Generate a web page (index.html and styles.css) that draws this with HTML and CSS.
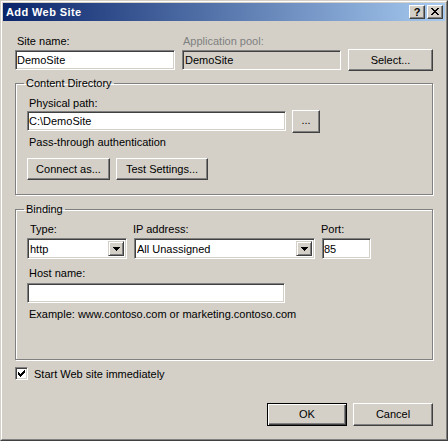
FILE: index.html
```html
<!DOCTYPE html>
<html>
<head>
<meta charset="utf-8">
<title>Add Web Site</title>
<link rel="stylesheet" href="styles.css">
</head>
<body>
<div class="window">
  <div class="frame">
    <div class="titlebar">
      <span class="title">Add Web Site</span>
      <div class="caption-btns">
        <span class="cbtn help">?</span>
        <span class="cbtn close"><svg width="8" height="7" viewBox="0 0 8 7" shape-rendering="crispEdges"><path d="M0 0h2v1H0zM6 0h2v1H6zM1 1h2v1H1zM5 1h2v1H5zM2 2h4v1H2zM3 3h2v1H3zM2 4h4v1H2zM1 5h2v1H1zM5 5h2v1H5zM0 6h2v1H0zM6 6h2v1H6z" fill="#000"/></svg></span>
      </div>
    </div>
    <div class="content">
      <div class="top-grid">
        <div class="lbl">Site name:</div>
        <div class="lbl disabled">Application pool:</div>
        <div></div>
        <input class="field" value="DemoSite">
        <div class="field readonly">DemoSite</div>
        <button class="btn select">Select...</button>
      </div>

      <fieldset class="group g1">
        <legend>Content Directory</legend>
        <div class="lbl">Physical path:</div>
        <div class="path-row">
          <input class="field path" value="C:\DemoSite">
          <button class="btn browse">...</button>
        </div>
        <div class="lbl pass">Pass-through authentication</div>
        <div class="btn-row">
          <button class="btn connect">Connect as...</button>
          <button class="btn test">Test Settings...</button>
        </div>
      </fieldset>

      <fieldset class="group g2">
        <legend>Binding</legend>
        <div class="binding-grid">
          <div class="lbl">Type:</div>
          <div class="lbl tight">IP address:</div>
          <div class="lbl tight">Port:</div>
          <div class="combo"><span class="combo-text">http</span><span class="drop"><svg width="7" height="4" viewBox="0 0 7 4" shape-rendering="crispEdges"><path d="M0 0h7v1H0zM1 1h5v1H1zM2 2h3v1H2zM3 3h1v1H3z" fill="#000"/></svg></span></div>
          <div class="combo"><span class="combo-text">All Unassigned</span><span class="drop"><svg width="7" height="4" viewBox="0 0 7 4" shape-rendering="crispEdges"><path d="M0 0h7v1H0zM1 1h5v1H1zM2 2h3v1H2zM3 3h1v1H3z" fill="#000"/></svg></span></div>
          <input class="field port" value="85">
        </div>
        <div class="lbl host-lbl">Host name:</div>
        <input class="field host" value="">
        <div class="lbl example">Example: www.contoso.com or marketing.contoso.com</div>
      </fieldset>

      <div class="check-row">
        <span class="checkbox"><svg width="7" height="7" viewBox="0 0 7 7" shape-rendering="crispEdges"><path d="M0 2h1v3H0zM1 3h1v3H1zM2 4h1v3H2zM3 3h1v3H3zM4 2h1v3H4zM5 1h1v3H5zM6 0h1v3H6z" fill="#000"/></svg></span>
        <span class="check-label">Start Web site immediately</span>
      </div>

      <div class="actions">
        <button class="btn action default">OK</button>
        <button class="btn action">Cancel</button>
      </div>
    </div>
  </div>
</div>
</body>
</html>
```

FILE: styles.css
```css
* {
  box-sizing: border-box;
}

html, body {
  margin: 0;
  padding: 0;
  background: #d4d0c8;
}

body {
  font-family: "Liberation Sans", Arial, sans-serif;
  font-size: 11px;
  line-height: 13px;
  color: #000;
}

.window {
  width: 448px;
  height: 441px;
  border: 1px solid;
  border-color: #d4d0c8 #404040 #404040 #d4d0c8;
  background: #d4d0c8;
}

.frame {
  height: 100%;
  border: 1px solid;
  border-color: #ffffff #808080 #808080 #ffffff;
  padding: 1px;
}

.titlebar {
  height: 18px;
  display: flex;
  align-items: center;
  justify-content: space-between;
  padding: 0 2px 0 3px;
  background: linear-gradient(to right, #0a246a, #a6caf0);
}

.title {
  color: #fff;
  font-weight: bold;
  font-size: 11px;
  line-height: 18px;
  letter-spacing: 0.4px;
}

.caption-btns {
  display: flex;
  gap: 2px;
}

.cbtn {
  width: 16px;
  height: 14px;
  display: flex;
  align-items: center;
  justify-content: center;
  background: #d4d0c8;
  border: 1px solid;
  border-color: #ffffff #404040 #404040 #ffffff;
  box-shadow: inset -1px -1px #808080;
}

.cbtn.help {
  font-weight: bold;
  font-size: 11px;
  line-height: 12px;
  padding-bottom: 1px;
}

.cbtn.close svg {
  display: block;
  margin-top: -1px;
}

.content {
  padding: 0 12px;
}

.lbl {
  line-height: 13px;
  white-space: nowrap;
  padding-left: 2px;
}

.lbl.disabled {
  color: #808080;
  padding-left: 1px;
}

.lbl.tight {
  padding-left: 0;
  margin-left: -1px;
}

.top-grid {
  margin-top: 14px;
  display: grid;
  grid-template-columns: 160px 159px 85px;
  grid-template-rows: 13px 20px;
  column-gap: 7px;
  row-gap: 2px;
}

.field {
  display: block;
  height: 20px;
  margin: 0;
  padding: 0 0 0 1px;
  font: inherit;
  color: #000;
  background: #fff;
  border: 1px solid;
  border-color: #808080 #ffffff #ffffff #808080;
  box-shadow: inset 1px 1px #404040, inset -1px -1px #d4d0c8;
  outline: none;
  line-height: 18px;
}

div.field {
  padding-left: 2px;
}

.field.readonly {
  background: #d4d0c8;
}

.btn {
  margin: 0;
  padding: 0;
  font: inherit;
  color: #000;
  background: #d4d0c8;
  border: 1px solid;
  border-color: #ffffff #404040 #404040 #ffffff;
  box-shadow: inset -1px -1px #808080;
  display: flex;
  align-items: center;
  justify-content: center;
  white-space: nowrap;
}

.btn.select {
  height: 22px;
  margin-top: -1px;
}

.group {
  margin: 0;
  padding: 7px 11px 0 11px;
  min-inline-size: 0;
  border: 1px solid #808080;
  box-shadow: inset 1px 1px #ffffff, 1px 1px #ffffff;
}

.group legend {
  padding: 0 2px;
  margin-left: -3px;
  line-height: 13px;
}

.g1 {
  margin-top: 7px;
  padding-bottom: 14px;
}

.path-row {
  display: flex;
  align-items: flex-start;
  gap: 6px;
}

.field.path {
  width: 259px;
  margin-top: 1px;
}

.btn.browse {
  width: 28px;
  height: 23px;
  padding-bottom: 2px;
}

.lbl.pass {
  margin-top: 3px;
  padding-left: 2px;
}

.btn-row {
  margin-top: 9px;
  display: flex;
  gap: 6px;
}

.btn.connect {
  width: 83px;
  height: 22px;
}

.btn.test {
  width: 92px;
  height: 22px;
}

.g2 {
  margin-top: 8px;
  padding-bottom: 38px;
}

.binding-grid {
  display: grid;
  grid-template-columns: 100px 181px 49px;
  grid-template-rows: 13px 21px;
  column-gap: 7px;
  row-gap: 2px;
}

.binding-grid .lbl:first-child {
  padding-left: 3px;
}

.combo {
  height: 21px;
  display: flex;
  align-items: stretch;
  background: #fff;
  border: 1px solid;
  border-color: #808080 #ffffff #ffffff #808080;
  box-shadow: inset 1px 1px #404040, inset -1px -1px #d4d0c8;
  padding: 2px 2px 2px 2px;
}

.combo-text {
  flex: 1;
  line-height: 17px;
  padding-left: 0px;
  overflow: hidden;
  white-space: nowrap;
}

.drop {
  width: 16px;
  display: flex;
  align-items: center;
  justify-content: center;
  background: #d4d0c8;
  border: 1px solid;
  border-color: #d4d0c8 #404040 #404040 #d4d0c8;
  box-shadow: inset 1px 1px #ffffff, inset -1px -1px #808080;
}

.drop svg {
  display: block;
}

.field.port {
  width: 49px;
  height: 21px;
}

.lbl.host-lbl {
  margin-top: 8px;
}

.field.host {
  width: 258px;
  margin-top: 3px;
}

.lbl.example {
  margin-top: 5px;
}

.check-row {
  margin-top: 7px;
  display: flex;
  align-items: flex-start;
  gap: 6px;
}

.checkbox {
  width: 13px;
  height: 13px;
  flex: none;
  display: flex;
  align-items: center;
  justify-content: center;
  background: #fff;
  border: 1px solid;
  border-color: #808080 #ffffff #ffffff #808080;
  box-shadow: inset 1px 1px #404040, inset -1px -1px #d4d0c8;
}

.checkbox svg {
  display: block;
}

.check-label {
  margin-top: 1px;
  line-height: 13px;
}

.actions {
  margin-top: 22px;
  display: flex;
  justify-content: flex-end;
  gap: 6px;
}

.btn.action {
  width: 80px;
  height: 23px;
}

.btn.default {
  border: 1px solid #000;
  box-shadow: inset 1px 1px #ffffff, inset -1px -1px #404040, inset -2px -2px #808080;
}
```
